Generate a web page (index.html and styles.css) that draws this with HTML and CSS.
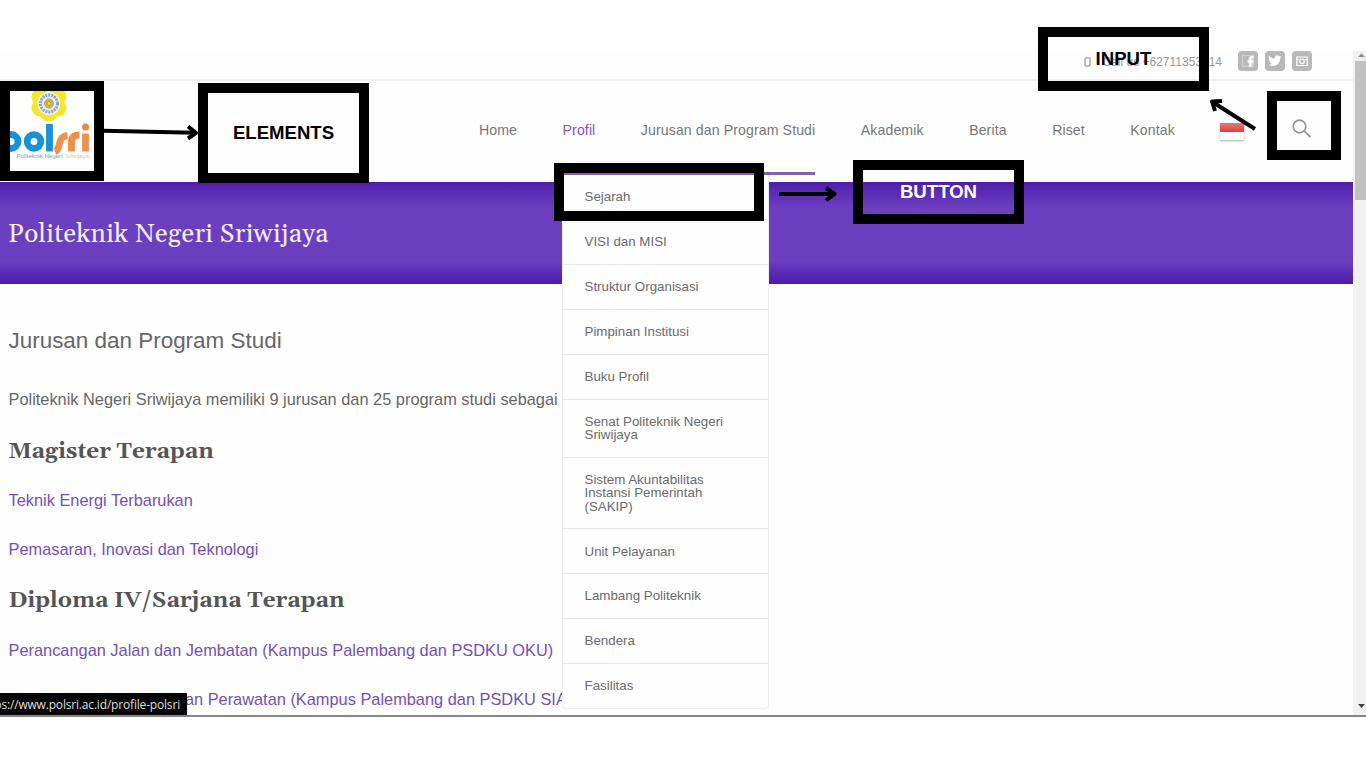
FILE: index.html
```html
<!DOCTYPE html>
<html lang="id">
<head>
<meta charset="utf-8">
<title>Politeknik Negeri Sriwijaya</title>
<link rel="stylesheet" href="styles.css">
</head>
<body>
<div class="window">
  <div class="page">
    <div class="topbar">
      <svg class="phone" viewBox="0 0 7 10"><rect x="1" y="1" width="5" height="8" rx="1"/></svg>
      <span class="call">Call us +62711353414</span>
      <div class="social">
        <svg viewBox="0 0 20 20"><rect width="20" height="20" rx="4"/><path class="cut" fill-rule="evenodd" d="M4 4H16V16H4ZM5.200 5.200V14.800H10.300V11.300H8.800V9.400H10.300V8Q10.300 5.200 13 5.200Z" fill-opacity=".35"/><path class="cut" d="M11.3 16V11.6H9.6V9.5H11.3V7.8Q11.3 5 14 5H15.6V7H14.4Q13.4 7 13.4 8V9.5H15.5L15.2 11.6H13.4V16Z"/></svg>
        <svg viewBox="0 0 20 20"><rect width="20" height="20" rx="4"/><path class="cut" d="M16.5 5.7l-1.4.4 1-1.4-1.7.6C12.300 3.300 9.500 4.700 9.800 7.600 7.400 7.500 5.400 6.400 4 4.600c-.8 1.400-.3 2.900.8 3.800l-1.200-.3c.1 1.400.9 2.300 2.300 2.700H4.800c.3 1 1.200 1.700 2.400 1.800C6 13.500 4.800 13.900 3.300 13.800 9 17.200 15.300 13.500 15.200 7.200Z"/></svg>
        <svg viewBox="0 0 20 20"><rect width="20" height="20" rx="4"/><path fill="none" stroke="#fff" stroke-width="1.200" d="M4.800 6H15.200V14.500H4.800ZM4.800 8.500H7M13 8.500H15.200"/><circle cx="10" cy="10.300" r="2.300" fill="none" stroke="#fff" stroke-width="1.200"/></svg>
      </div>
    </div>
    <header class="header">
      <svg class="logo" viewBox="0 0 90 82">
        <g fill="#f4e72a"><circle cx="40.500" cy="7" r="9"/><circle cx="57.500" cy="7" r="9"/><circle cx="40" cy="18" r="8.500"/><circle cx="58" cy="18" r="8.500"/><circle cx="49" cy="22" r="9.500"/></g>
        <circle cx="49" cy="13.500" r="11.500" fill="#eef0e8"/>
        <circle cx="49" cy="13.500" r="8.500" fill="none" stroke="#8c9fc8" stroke-width="3" stroke-dasharray="2 1"/>
        <circle cx="49" cy="13.500" r="4.500" fill="#d7bb36" stroke="#8ca3c0"/>
        <circle cx="49" cy="13.500" r="2" fill="#f4e72a" stroke="#a59654"/>
        <g fill="none" stroke-width="6.800">
          <g stroke="#1990d8"><circle cx="11" cy="51.500" r="7"/><circle cx="34" cy="51.500" r="6.800"/><path d="M2.500 48V72M49.500 34V61.500"/></g>
          <g stroke="#f0914a"><path d="M55 61.500C62 59 56 47 67.500 45.300M71.500 61.500V51Q72 45 79.500 45M85.500 43.500V61.500"/></g>
        </g>
        <circle cx="85.500" cy="37" r="3.500" fill="#e98946"/>
        <text x="16.500" y="67.500" textLength="46" lengthAdjust="spacingAndGlyphs" class="logo-sub blue">Politeknik Negeri</text>
        <text x="65" y="67.500" textLength="24" lengthAdjust="spacingAndGlyphs" class="logo-sub orange">Sriwijaya</text>
      </svg>
      <nav class="nav">
        <a>Home</a><a class="active">Profil</a><a>Jurusan dan Program Studi</a><a>Akademik</a><a>Berita</a><a>Riset</a><a>Kontak</a>
        <span class="flag"></span>
        <svg class="search" viewBox="0 0 20 20"><circle cx="7.500" cy="7.500" r="6.300"/><path d="M12.200 12.200L18.500 18"/></svg>
      </nav>
    </header>
    <section class="banner"><h1>Politeknik Negeri Sriwijaya</h1></section>
    <main class="content">
      <h2>Jurusan dan Program Studi</h2>
      <p>Politeknik Negeri Sriwijaya memiliki 9 jurusan dan 25 program studi sebagai</p>
      <h3>Magister Terapan</h3>
      <p><a>Teknik Energi Terbarukan</a></p>
      <p><a>Pemasaran, Inovasi dan Teknologi</a></p>
      <h3>Diploma IV/Sarjana Terapan</h3>
      <p><a>Perancangan Jalan dan Jembatan (Kampus Palembang dan PSDKU OKU)</a></p>
      <p><a>Teknik Mesin Produksi dan Perawatan (Kampus Palembang dan PSDKU SIAK)</a></p>
    </main>
    <div class="underline"></div>
    <ul class="menu">
      <li>Sejarah</li><li>VISI dan MISI</li><li>Struktur Organisasi</li><li>Pimpinan Institusi</li><li>Buku Profil</li>
      <li>Senat Politeknik Negeri<br>Sriwijaya</li><li>Sistem Akuntabilitas<br>Instansi Pemerintah<br>(SAKIP)</li>
      <li>Unit Pelayanan</li><li>Lambang Politeknik</li><li>Bendera</li><li>Fasilitas</li>
    </ul>
    <div class="status"><span>ps://www.polsri.ac.id/profile-polsri</span></div>
  </div>
  <div class="scrollbar">
    <svg viewBox="0 0 13 10"><path d="M5 6L8.500 2.500L12 6Z" fill="#888"/></svg>
    <div class="thumb"></div>
    <svg class="down" viewBox="0 0 13 10"><path d="M5 3L8.500 7L12 3Z" fill="#444"/></svg>
  </div>
</div>
<div class="mark mark-logo"></div>
<div class="mark mark-elements">ELEMENTS</div>
<div class="mark mark-input">INPUT</div>
<div class="mark mark-search"></div>
<div class="mark mark-item"></div>
<div class="mark mark-button">BUTTON</div>
<svg class="arrows" viewBox="0 0 1366 768">
  <path d="M103 130.700L195 132.700M188 126.500L196 132.800L188 138.500"/>
  <path d="M779 194H834M826 188L834.500 194L826 200.500"/>
  <path d="M1255 129L1212.500 102M1222 101L1212 101.500L1215 111"/>
</svg>
</body>
</html>
```
FILE: styles.css
```css
* { box-sizing: border-box; }
body { margin: 0; width: 1366px; height: 768px; overflow: hidden; position: relative; background: #fff; font-family: Arial, "Liberation Sans", sans-serif; color: #666; }
h1, h2, h3, p, ul { margin: 0; padding: 0; font-weight: normal; }
.window { display: flex; margin-top: 51px; height: 666px; border-bottom: 2px solid #858585; overflow: hidden; }
.page { position: relative; width: 1353px; height: 664px; overflow: hidden; background: #fefefe; }
.topbar { height: 30px; display: flex; align-items: flex-start; justify-content: flex-end; padding-right: 41px; border-bottom: 2px solid #f1f1f1; font-size: 12px; color: #999; }
.phone { width: 7px; height: 10px; margin: 6px 11px 0 0; fill: none; stroke: #aaa; stroke-width: 1.5; }
.call { line-height: 22px; }
.social { display: flex; gap: 7px; margin-left: 16px; }
.social svg { width: 20px; height: 20px; fill: #b8b8b8; }
.social .cut { fill: #fff; }
.header { display: flex; height: 101px; }
.logo { width: 90px; height: 82px; margin: 9px 0 0; flex: none; }
.logo-sub { font-size: 6px; }
.blue { fill: #65a7c8; }
.orange { fill: #f0bd94; }
.nav { display: flex; align-items: flex-start; gap: 45.500px; margin-left: 389px; padding-top: 41px; font-size: 14.130px; line-height: 16px; letter-spacing: .1px; white-space: nowrap; color: #777; }
.active { color: #8355c4; }
.flag { width: 24px; height: 17px; margin-top: 1px; background: linear-gradient(#e97878, #df4046 50%, #fff 50%, #f8f8f8); box-shadow: 0 1px 2px #aaa; }
.search { width: 20px; height: 20px; margin: -3px 0 0 2.500px; fill: none; stroke: #969696; stroke-width: 1.700; }
.banner { height: 102px; background: linear-gradient(#501cab, #5929b3 8%, #6c3fc0 26%, #6c3fc0 77%, #5929b3 90%, #501cab); padding: 37px 8px 0; }
.banner h1 { font: 26px/32px Gelasio, "Liberation Serif", serif; letter-spacing: .3px; color: #f4edfb; white-space: nowrap; }
.content { padding: 42px 0 0 8.500px; white-space: nowrap; }
.content h2 { font-size: 22.450px; line-height: 30px; }
.content p { font-size: 16.360px; line-height: 20px; margin-bottom: 29.200px; }
.content h2 + p { margin-top: 33px; margin-bottom: 29.500px; }
.content h3 { font: bold 22.500px/28px Gelasio, "Liberation Serif", serif; color: #555; margin: -1px 0 24.500px; }
.content a { color: #7550b5; }
.underline { position: absolute; left: 563px; top: 121px; width: 252px; height: 3px; background: #8062b4; }
.menu { position: absolute; left: 562px; top: 124px; width: 207px; background: #fefefe; border: 1px solid #ededed; border-top: 0; border-radius: 0 0 4px 4px; list-style: none; }
.menu li { padding: 15.100px 21.500px 15.500px; border-bottom: 1px solid #e8e8e8; font-size: 13.330px; line-height: 13.330px; white-space: nowrap; color: #6b6b6b; }
.menu li:last-child { border-bottom: 0; }
.status { position: absolute; left: 0; bottom: 0; width: 187px; height: 22px; background: #070707; display: flex; justify-content: flex-end; padding-right: 7px; font: 12px/23px "Open Sans", "Noto Sans", sans-serif; letter-spacing: -.18px; color: #ddd; white-space: nowrap; }
.scrollbar { width: 13px; display: flex; flex-direction: column; background: #f1f1f1; }
.scrollbar svg { width: 13px; height: 10px; }
.thumb { height: 139px; margin-left: 2px; background: #c1c1c1; }
.scrollbar .down { margin-top: auto; margin-bottom: 4px; }
.mark { position: absolute; display: flex; align-items: center; justify-content: center; border: 10px solid #000; color: #000; font-weight: bold; font-size: 18.600px; }
.mark-logo { left: 0; top: 81px; width: 104px; height: 100px; }
.mark-elements { left: 198px; top: 83px; width: 171px; height: 100px; }
.mark-input { left: 1038px; top: 27px; width: 171px; height: 64px; }
.mark-search { left: 1267px; top: 91px; width: 74px; height: 69px; }
.mark-item { left: 554px; top: 163px; width: 210px; height: 58px; }
.mark-button { left: 853px; top: 160px; width: 171px; height: 64px; color: #fff; }
.arrows { position: absolute; left: 0; top: 0; width: 1366px; height: 768px; fill: none; stroke: #000; stroke-width: 4; stroke-linejoin: round; }
```
